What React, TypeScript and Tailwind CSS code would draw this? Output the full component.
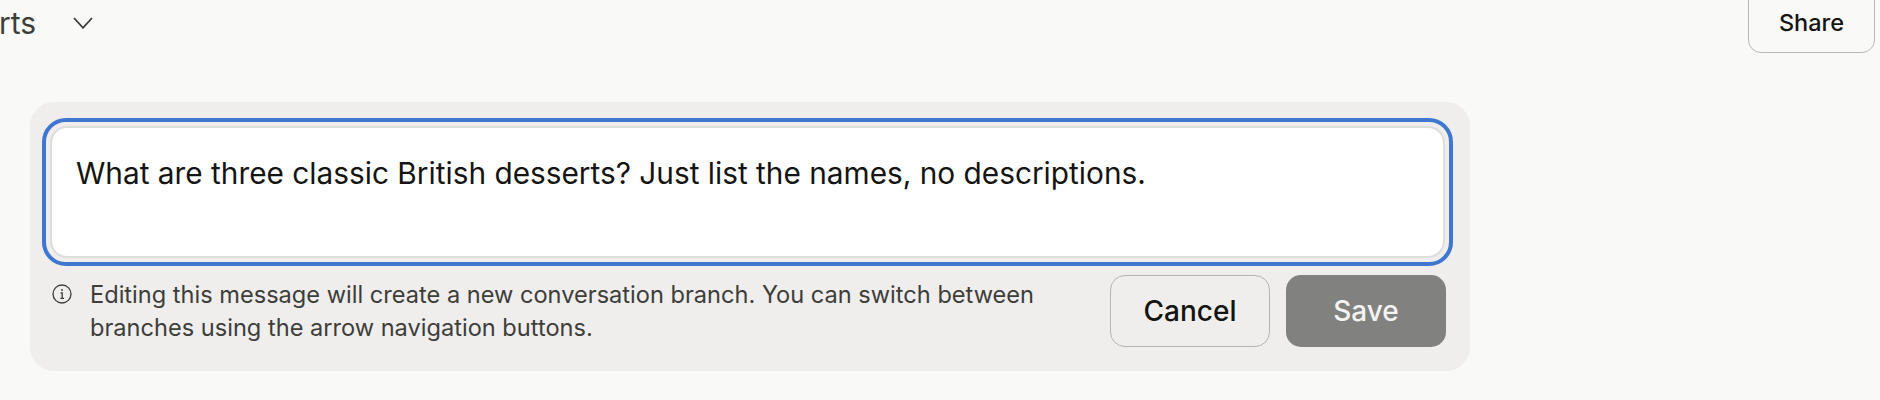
export default function App() {
  return (
    <div className="h-[400px] w-[1880px] overflow-hidden bg-[#f9f9f7] font-['Inter',sans-serif]">
      <header className="flex h-[54px] items-start justify-between pr-[5px]">
        <div className="-ml-[1px] flex items-center gap-[37px] pt-[6px]">
          <span className="text-[30px] leading-[34px] text-[#3d3d3a]">rts</span>
          <svg viewBox="0 0 20 12" fill="none" stroke="#3d3d3a" strokeWidth="1.8" className="h-[12px] w-[20px]">
            <path d="M1 1l9 9.8L19 1" />
          </svg>
        </div>
        <button className="-mt-[1px] h-[54px] w-[127px] rounded-b-[13px] border border-[#b8b7b2] pb-[7px] text-[23.5px] font-medium text-[#141413]">
          Share
        </button>
      </header>
      <div className="ml-[30px] mt-[48px] w-[1440px] rounded-[24px] bg-[#efeeec] pb-[24px] pl-[12px] pr-[17px] pt-[16px]">
        <div className="h-[148px] rounded-[24px] border-[4px] border-[#3f76d0] p-[4px]">
          <div className="h-full rounded-[17px] border-[2px] border-[#dedddb] bg-white px-[24px] pt-[25px] text-[29.8px] leading-[40px] text-[#141413]">
            What are three classic British desserts? Just list the names, no descriptions.
          </div>
        </div>
        <div className="mt-[9px] flex items-start justify-between pr-[7px]">
          <div className="flex items-start gap-[18px] pl-[10px]">
            <svg viewBox="0 0 20 20" fill="none" stroke="#3d3d3a" strokeWidth="1.3" className="mt-[9px] h-[20px] w-[20px] shrink-0">
              <circle cx="10" cy="10" r="9" />
              <circle cx="10" cy="6" r="0.9" fill="#3d3d3a" stroke="none" />
              <path d="M8.6 9H10.2V14.4M8.3 14.4H12" />
            </svg>
            <p className="mt-[3px] w-[1000px] text-[23.6px] leading-[33px] text-[#3d3d3a]">
              Editing this message will create a new conversation branch. You can switch between branches using the arrow navigation buttons.
            </p>
          </div>
          <div className="flex gap-[16px]">
            <button className="h-[72px] w-[160px] rounded-[15px] border border-[#b5b4b0] text-[28px] font-medium text-[#141413]">
              Cancel
            </button>
            <button className="h-[72px] w-[160px] rounded-[15px] bg-[#81817f] text-[28px] font-medium text-[#f3f3f1]">
              Save
            </button>
          </div>
        </div>
      </div>
    </div>
  )
}
